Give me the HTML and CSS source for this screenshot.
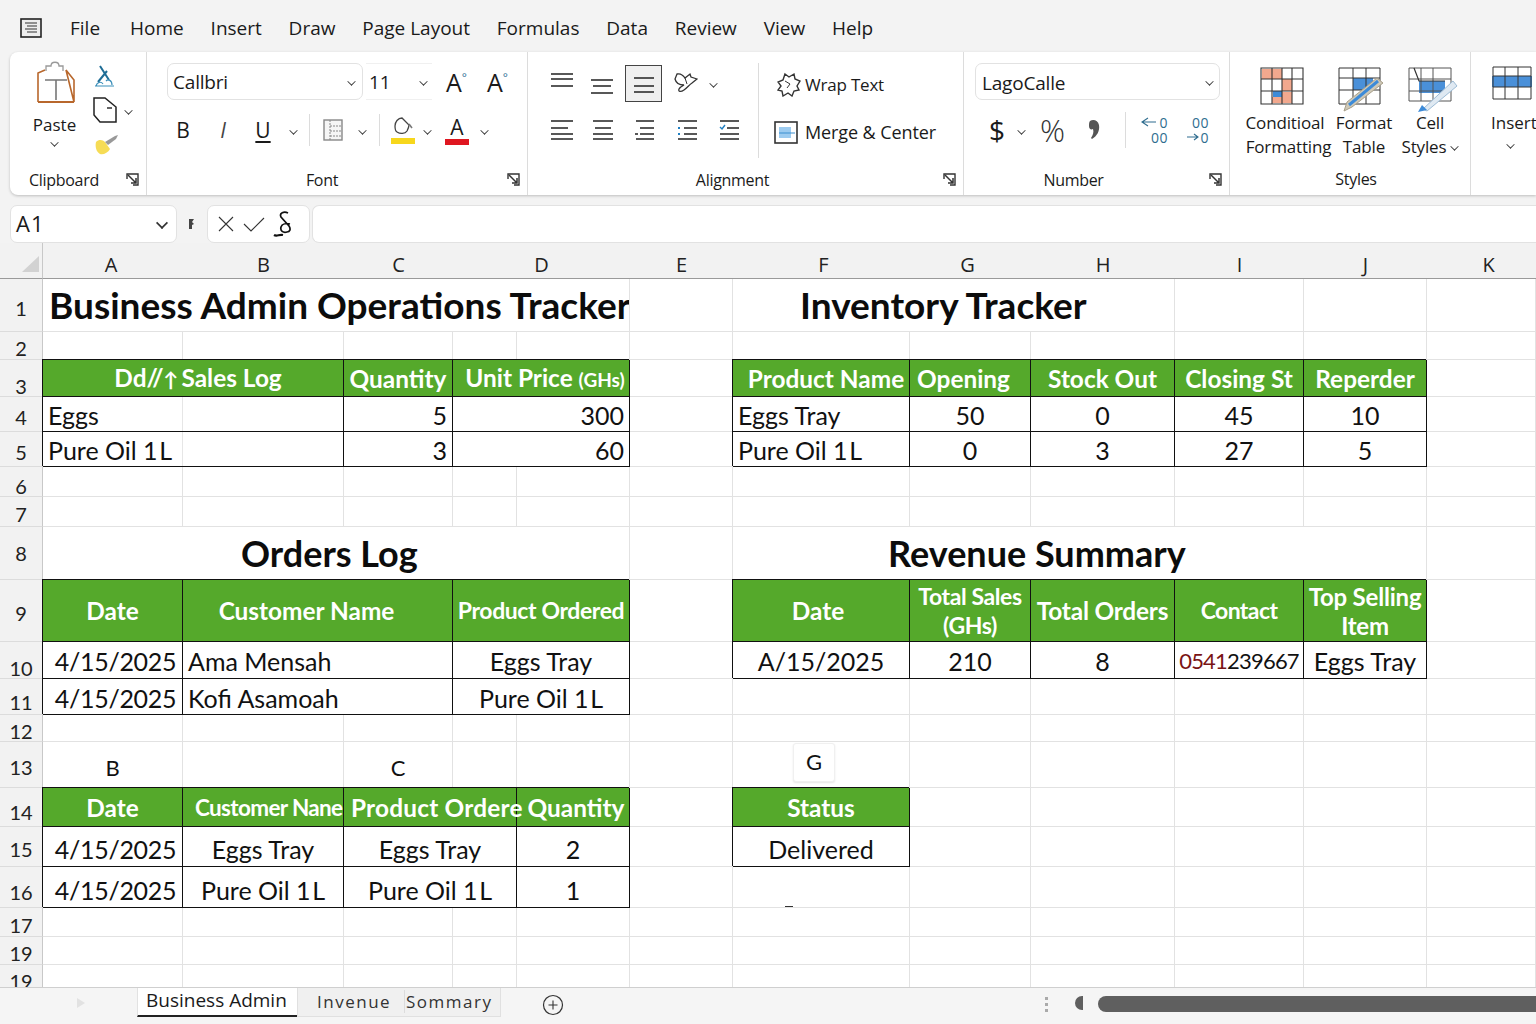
FILE: index.html
```html
<!DOCTYPE html>
<html lang="en">
<head>
    <meta charset="UTF-8">
    <meta name="viewport" content="width=device-width, initial-scale=1.0">
    <title>Business Admin Operations Tracker</title>
    <link rel="stylesheet" href="styles.css">
</head>
<body>

<svg class="defs" aria-hidden="true">
    <symbol id="launcher" viewBox="0 0 13 13">
        <path d="M1 6V1h11v11H7" fill="none" stroke="#333" stroke-width="1.4"/>
        <path d="M2 2l8 8M10 5v5H5" fill="none" stroke="#333" stroke-width="1.5"/>
    </symbol>
</svg>

<div class="app">

    <nav class="menubar">
        <svg class="menu-icon" width="22" height="20" viewBox="0 0 22 20">
            <rect x="1" y="1" width="20" height="18" fill="#eee" stroke="#222" stroke-width="1.6"/>
            <path d="M5 5h12M7 8h10M5 11h12M7 14h10" stroke="#333" stroke-width="1.2"/>
        </svg>
        <a class="menu-file">File</a>
        <a>Home</a>
        <a>Insert</a>
        <a>Draw</a>
        <a>Page Layout</a>
        <a>Formulas</a>
        <a>Data</a>
        <a>Review</a>
        <a>View</a>
        <a>Help</a>
    </nav>

    <section class="ribbon">

        <div class="group g-clipboard">
            <div class="group-body clip-body">
                <div class="paste">
                    <svg width="40" height="46" viewBox="0 0 40 46">
                        <path d="M2 44V15l7-3M30 12l8 10v22z" fill="none" stroke="#b8672c" stroke-width="1.6"/>
                        <path d="M2 44h36" stroke="#b8672c" stroke-width="2"/>
                        <path d="M10 13V8h5c0-5 8-5 8 0h4v5" fill="#fff" stroke="#999" stroke-width="1.3"/>
                        <path d="M9 22h22M20 22v20" stroke="#777" stroke-width="1.6"/>
                    </svg>
                    <span>Paste</span>
                    <i class="chev"></i>
                </div>
                <div class="clip-tools">
                    <svg width="22" height="22" viewBox="0 0 22 22">
                        <path d="M6 1l9 14M13 6L4 17" fill="none" stroke="#1f6d96" stroke-width="2"/>
                        <path d="M2 21c1-4 5-5 7-2M12 16c2-2 6-1 6 4M1 21h19" fill="none" stroke="#3b8fba" stroke-width="1.2"/>
                    </svg>
                    <div class="clip-copy">
                        <svg width="26" height="28" viewBox="0 0 26 28">
                            <path d="M2 2h11l11 9v15H8l-6-7z" fill="#fff" stroke="#222" stroke-width="1.5"/>
                            <path d="M15 12h5" stroke="#222" stroke-width="1.4"/>
                        </svg>
                        <i class="chev"></i>
                    </div>
                    <svg width="26" height="24" viewBox="0 0 26 24">
                        <path d="M2 9c3-3 7-2 9 0l5 7c-2 4-7 6-10 5-4-2-5-8-4-12z" fill="#f6dc55"/>
                        <path d="M11 9l10-6 3-1-2 4-8 6z" fill="#999"/>
                    </svg>
                </div>
            </div>
            <div class="group-label">
                <span class="clip-label">Clipboard</span>
                <svg class="launcher"><use href="#launcher"/></svg>
            </div>
        </div>

        <div class="group g-font">
            <div class="group-body">
                <div class="font-top">
                    <div class="combo font-name">Callbri<i class="chev"></i></div>
                    <div class="combo font-size">11<i class="chev"></i></div>
                    <span class="grow grow-up">A<sup>°</sup></span>
                    <span class="grow grow-down">A<sup>°</sup></span>
                </div>
                <div class="font-bottom">
                    <span class="fmt fmt-b">B</span>
                    <span class="fmt fmt-i">I</span>
                    <span class="fmt fmt-u">U</span>
                    <span class="slot s20"><i class="chev"></i></span>
                    <span class="vsep sep-a"></span>
                    <svg class="border-icon" width="20" height="22" viewBox="0 0 20 22">
                        <rect x="1" y="1" width="18" height="20" fill="#f6f6f6" stroke="#888" stroke-width="1.4"/>
                        <path d="M7 1v20M7 7h12M7 12h12M7 17h12" stroke="#888" stroke-dasharray="2 1"/>
                    </svg>
                    <span class="slot s20 after-border"><i class="chev"></i></span>
                    <span class="vsep sep-b"></span>
                    <div class="swatch-tool fill-tool">
                        <svg width="22" height="20" viewBox="0 0 22 20">
                            <path d="M3 10c0-4 3-8 7-8l7 7c0 2-1 4-2 6-2 3-7 3-10 1-2-1-2-4-2-6z" fill="none" stroke="#444" stroke-width="1.3"/>
                            <path d="M17 8l3 4" stroke="#777" stroke-width="1.5"/>
                        </svg>
                        <b class="swatch yellow"></b>
                    </div>
                    <span class="slot s20 after-fill"><i class="chev"></i></span>
                    <div class="swatch-tool color-tool">
                        <span>A</span>
                        <b class="swatch red"></b>
                    </div>
                    <span class="slot s20 after-color"><i class="chev"></i></span>
                </div>
            </div>
            <div class="group-label">
                <span>Font</span>
                <svg class="launcher"><use href="#launcher"/></svg>
            </div>
        </div>

        <div class="group g-align">
            <div class="group-body align-body">
                <div class="align-grid">
                    <div class="align-row">
                        <svg class="al" width="24" height="22" viewBox="0 0 24 22"><path d="M1 2h22M1 7h22M1 14h22" stroke="#222" stroke-width="1.5"/></svg>
                        <svg class="al" width="24" height="22" viewBox="0 0 24 22"><path d="M1 8h22M3 14h18M1 21h22" stroke="#222" stroke-width="1.5"/></svg>
                        <span class="al-on"><svg width="22" height="20" viewBox="0 0 22 20"><path d="M1 5h20M1 13h20M1 19h20" stroke="#222" stroke-width="1.5"/></svg></span>
                        <svg class="orient" width="24" height="24" viewBox="0 0 24 24">
                            <path d="M3 3c4-1 6 1 8 4l5-4 1 3 6 2-5 4c-3 2-5 5-8 7-3 2-6 2-5-1 1-2 3-3 5-4-4 0-8-2-9-6z" fill="#fff" stroke="#333" stroke-width="1.3"/>
                            <path d="M11 7l2 6" stroke="#333"/>
                        </svg>
                        <i class="chev orient-chev"></i>
                    </div>
                    <div class="align-row second">
                        <svg class="al" width="24" height="22" viewBox="0 0 24 22"><path d="M1 2h22M1 9h17M1 15h22M1 20h22" stroke="#222" stroke-width="1.5"/></svg>
                        <svg class="al" width="22" height="22" viewBox="0 0 22 22"><path d="M1 2h20M3 9h16M1 15h20M1 20h20" stroke="#222" stroke-width="1.5"/></svg>
                        <svg class="al al-right" width="20" height="22" viewBox="0 0 20 22"><path d="M2 2h18M6 9h14M1 15h3M6 15h14M2 20h18" stroke="#222" stroke-width="1.5"/></svg>
                        <svg class="al al-in" width="20" height="22" viewBox="0 0 20 22"><path d="M1 2h19M7 9h13M7 15h13M1 20h19" stroke="#222" stroke-width="1.5"/><path d="M1 9h3M1 15h3" stroke="#1f7fc2" stroke-width="2" stroke-dasharray="2 1"/></svg>
                        <svg class="al al-out" width="20" height="22" viewBox="0 0 20 22"><path d="M1 2h19M8 9h12M1 15h19M1 20h19" stroke="#222" stroke-width="1.5"/><path d="M1 8l2 2 3-4" fill="none" stroke="#1f7fc2" stroke-width="1.4"/></svg>
                    </div>
                </div>
                <span class="vsep sep-c"></span>
                <div class="wrap-col">
                    <div class="wrap-item">
                        <svg width="24" height="25" viewBox="0 0 24 25">
                            <path d="M8 2l4 3 5-3 1 5 5 2-3 5 2 4-5 1-2 5-4-3-5 3-1-5-4-1 3-4-3-4 5-2z" fill="#fff" stroke="#333" stroke-width="1.4"/>
                            <path d="M8 9l5 3-3 4" fill="none" stroke="#333"/>
                        </svg>
                        <span>Wrap Text</span>
                    </div>
                    <div class="wrap-item merge">
                        <svg width="24" height="23" viewBox="0 0 24 23">
                            <rect x="1" y="1" width="22" height="21" fill="#fff" stroke="#333" stroke-width="1.6"/>
                            <rect x="5" y="6" width="12" height="11" fill="#9ccbf0"/>
                            <path d="M5 12h16" stroke="#3a8fd0"/>
                        </svg>
                        <span>Merge &amp; Center</span>
                    </div>
                </div>
            </div>
            <div class="group-label">
                <span>Alignment</span>
                <svg class="launcher"><use href="#launcher"/></svg>
            </div>
        </div>

        <div class="group g-number">
            <div class="group-body">
                <div class="combo num-format">LagoCalle<i class="chev"></i></div>
                <div class="num-row">
                    <span class="num-dollar">$</span>
                    <i class="chev"></i>
                    <span class="num-pct">%</span>
                    <svg class="num-comma" width="11" height="22" viewBox="0 0 11 22">
                        <path d="M1 2c3-2 8-1 9 4 1 6-2 11-7 14l-1-1c2-3 3-6 2-9-2 1-4 0-4-3 0-2 0-4 1-5z" fill="#555"/>
                    </svg>
                    <span class="vsep sep-d"></span>
                    <div class="dec dec-inc">
                        <span><svg width="17" height="11" viewBox="0 0 17 11"><path d="M7 1L1 5l6 4M2 5h13" fill="none" stroke="#2f6d8f" stroke-width="1.1"/></svg>0</span>
                        <span>00</span>
                    </div>
                    <div class="dec dec-dec">
                        <span>00</span>
                        <span><svg width="13" height="11" viewBox="0 0 13 11"><path d="M1 5h11M8 2l4 3-4 3" fill="none" stroke="#2f6d8f" stroke-width="1.1"/></svg>0</span>
                    </div>
                </div>
            </div>
            <div class="group-label">
                <span>Number</span>
                <svg class="launcher"><use href="#launcher"/></svg>
            </div>
        </div>

        <div class="group g-styles">
            <div class="group-body styles-body">
                <div class="style-btn btn-cf">
                    <svg width="44" height="46" viewBox="0 0 44 46" preserveAspectRatio="xMidYMin">
                        <path d="M2 2h10v10H2zM12 2h10v10H12zM22 12h10v12H22zM12 30h10v6H12zM22 25h10v11H22z" fill="#f2a88e"/>
                        <rect x="13" y="24" width="9" height="6" fill="#3d8bd8"/>
                        <path d="M1 1h42v36H1zM1 12h42M1 24h42M12 1v36M22 1v36M32 1v36" fill="none" stroke="#333" stroke-width="1.1"/>
                    </svg>
                    <span>Conditioal<br><b class="cf-second">Formatting</b></span>
                </div>
                <div class="style-btn btn-ft">
                    <svg width="46" height="46" viewBox="0 0 46 46">
                        <rect x="15" y="11" width="20" height="12" fill="#4a90d9"/>
                        <path d="M1 1h41v36H1zM1 11h41M1 23h41M15 1v36M28 1v36" fill="none" stroke="#333" stroke-width="1"/>
                        <path d="M6 44l3-9 30-24 6 5-31 24z" fill="#cfc9b8" stroke="#a89f8a"/>
                        <path d="M11 38L40 14" stroke="#3d8bd8" stroke-width="3"/>
                    </svg>
                    <span>Format<br>Table</span>
                </div>
                <div class="style-btn btn-cs">
                    <svg width="50" height="46" viewBox="0 0 50 46">
                        <rect x="11" y="14" width="26" height="12" fill="#4a90d9"/>
                        <path d="M1 1h42v33H1zM1 12h42M1 24h42M13 1v33M25 1v33" fill="none" stroke="#555" stroke-width="1"/>
                        <path d="M6 1l5 13h26" fill="none" stroke="#333" stroke-width="1.2"/>
                        <path d="M15 42l30-28 4 5-30 25z" fill="#dfe9f2" stroke="#9dbcd6"/>
                        <path d="M14 38l-4 7 9-2z" fill="#3d8bd8"/>
                    </svg>
                    <span>Cell<br>Styles<i class="chev inline"></i></span>
                </div>
            </div>
            <div class="group-label styles-label"><span>Styles</span></div>
        </div>

        <div class="group g-cells">
            <div class="insert-btn">
                <svg width="42" height="34" viewBox="0 0 42 34">
                    <rect x="1" y="10" width="40" height="11" fill="#4a90d9"/>
                    <path d="M2 1h38v32H2zM2 10h38M2 21h38M14 1v32M27 1v32" fill="none" stroke="#333" stroke-width="1"/>
                </svg>
                <span>Insert</span>
                <i class="chev"></i>
            </div>
        </div>

    </section>

    <div class="formula-bar">
        <div class="name-box">A1<i class="chev big"></i></div>
        <svg class="fb-grip" width="8" height="12" viewBox="0 0 8 12"><path d="M1 1h5L4 4l2 2-2 1v4H1z" fill="#444"/></svg>
        <div class="fb-tools">
            <svg width="18" height="18" viewBox="0 0 18 18"><path d="M2 2l14 14M16 2L2 16" stroke="#333" stroke-width="1.1"/></svg>
            <svg width="22" height="18" viewBox="0 0 22 18"><path d="M1 9l7 7L21 3" fill="none" stroke="#333" stroke-width="1.1"/></svg>
            <svg width="22" height="26" viewBox="0 0 22 26">
                <path d="M15 2c-4-2-9 0-7 4l8 9c2 3 1 6-2 6-4 1-7-1-6-5 1-3 5-4 9-3" fill="none" stroke="#111" stroke-width="1.7"/>
                <path d="M1 24c3 2 5-1 9 0" fill="none" stroke="#111" stroke-width="2.2"/>
            </svg>
        </div>
        <div class="fb-input"></div>
    </div>

    <div class="sheet">
        <table class="grid">
            <colgroup>
                <col class="c-head"><col class="c-a"><col class="c-b"><col class="c-c"><col class="c-d1"><col class="c-d2"><col class="c-e"><col class="c-f"><col class="c-g"><col class="c-h"><col class="c-i"><col class="c-j"><col class="c-k">
            </colgroup>
            <tr class="letters">
                <th class="corner"><span class="corner-tri"></span></th>
                <th class="ltr-a">A</th><th>B</th><th>C</th><th colspan="2">D</th><th>E</th><th class="ltr-f">F</th><th class="ltr-g">G</th><th>H</th><th>I</th><th>J</th><th class="ltr-k">K</th>
            </tr>
            <tr class="r1">
                <th>1</th>
                <td colspan="5" class="title">Business Admin Operations Tracker</td><td></td>
                <td colspan="3" class="title t-inv">Inventory Tracker</td><td></td><td></td><td></td>
            </tr>
            <tr class="r2">
                <th>2</th>
                <td></td><td></td><td></td><td></td><td></td><td></td><td></td><td></td><td></td><td></td><td></td><td></td>
            </tr>
            <tr class="r3">
                <th>3</th>
                <td colspan="2" class="hd hd-sales">Dd//<span class="arrow">↑</span> Sales Log</td><td class="hd">Quantity</td><td colspan="2" class="hd hd-price">Unit Price <small>(GHs)</small></td><td></td>
                <td class="hd hd-product">Product Name</td><td class="hd hd-opening">Opening</td><td class="hd">Stock Out</td><td class="hd">Closing St</td><td class="hd">Reperder</td><td></td>
            </tr>
            <tr class="r4">
                <th>4</th>
                <td colspan="2" class="bd faint">Eggs</td><td class="bd num">5</td><td colspan="2" class="bd num">300</td><td></td>
                <td class="bd">Eggs Tray</td><td class="bd mid">50</td><td class="bd mid">0</td><td class="bd mid">45</td><td class="bd mid">10</td><td></td>
            </tr>
            <tr class="r5">
                <th>5</th>
                <td colspan="2" class="bd faint">Pure Oil 1&#8202;L</td><td class="bd num">3</td><td colspan="2" class="bd num">60</td><td></td>
                <td class="bd">Pure Oil 1&#8202;L</td><td class="bd mid">0</td><td class="bd mid">3</td><td class="bd mid">27</td><td class="bd mid">5</td><td></td>
            </tr>
            <tr class="r6">
                <th>6</th>
                <td></td><td></td><td></td><td></td><td></td><td></td><td></td><td></td><td></td><td></td><td></td><td></td>
            </tr>
            <tr class="r7">
                <th>7</th>
                <td></td><td></td><td></td><td></td><td></td><td></td><td></td><td></td><td></td><td></td><td></td><td></td>
            </tr>
            <tr class="r8">
                <th>8</th>
                <td colspan="5" class="title t-orders">Orders Log</td><td></td>
                <td colspan="5" class="title t-revenue">Revenue Summary</td><td></td>
            </tr>
            <tr class="r9">
                <th>9</th>
                <td class="hd">Date</td><td colspan="2" class="hd hd-customer">Customer Name</td><td colspan="2" class="hd hd-narrow">Product Ordered</td><td></td>
                <td class="hd hd-date2">Date</td><td class="hd hd-wrap">Total Sales (GHs)</td><td class="hd hd-orders">Total Orders</td><td class="hd hd-contact">Contact</td><td class="hd hd-wrap hd-top">Top Selling Item</td><td></td>
            </tr>
            <tr class="r10">
                <th>10</th>
                <td class="bd mid date">4/15/2025</td><td colspan="2" class="bd">Ama Mensah</td><td colspan="2" class="bd mid">Eggs Tray</td><td></td>
                <td class="bd mid">A/15/2025</td><td class="bd mid">210</td><td class="bd mid">8</td><td class="bd mid phone"><span class="red-digits">0541</span>239667</td><td class="bd mid">Eggs Tray</td><td></td>
            </tr>
            <tr class="r11">
                <th>11</th>
                <td class="bd mid date">4/15/2025</td><td colspan="2" class="bd">Kofi Asamoah</td><td colspan="2" class="bd mid">Pure Oil 1&#8202;L</td><td></td>
                <td></td><td></td><td></td><td></td><td></td><td></td>
            </tr>
            <tr class="r12">
                <th>12</th>
                <td></td><td></td><td></td><td></td><td></td><td></td><td></td><td></td><td></td><td></td><td></td><td></td>
            </tr>
            <tr class="r13">
                <th>13</th>
                <td class="mid letter">B</td><td></td><td class="mid letter">C</td><td></td><td></td><td></td>
                <td class="chip-cell"><span class="chip">G</span></td><td></td><td></td><td></td><td></td><td></td>
            </tr>
            <tr class="r14">
                <th>14</th>
                <td class="hd">Date</td><td class="hd hd-tight">Customer Nane</td><td colspan="2" class="hd hd-over">Product Ordere</td><td class="hd hd-qty">Quantity</td><td></td>
                <td class="hd">Status</td><td></td><td></td><td></td><td></td><td></td>
            </tr>
            <tr class="r15">
                <th>15</th>
                <td class="bd mid date">4/15/2025</td><td class="bd mid">Eggs Tray</td><td colspan="2" class="bd mid">Eggs Tray</td><td class="bd mid">2</td><td></td>
                <td class="bd mid">Delivered</td><td></td><td></td><td></td><td></td><td></td>
            </tr>
            <tr class="r16">
                <th>16</th>
                <td class="bd mid date">4/15/2025</td><td class="bd mid">Pure Oil 1&#8202;L</td><td colspan="2" class="bd mid">Pure Oil 1&#8202;L</td><td class="bd mid">1</td><td></td>
                <td class="tick"></td><td></td><td></td><td></td><td></td><td></td>
            </tr>
            <tr class="r17">
                <th>17</th>
                <td></td><td></td><td></td><td></td><td></td><td></td><td></td><td></td><td></td><td></td><td></td><td></td>
            </tr>
            <tr class="r18">
                <th>19</th>
                <td></td><td></td><td></td><td></td><td></td><td></td><td></td><td></td><td></td><td></td><td></td><td></td>
            </tr>
            <tr class="r19">
                <th>19</th>
                <td></td><td></td><td></td><td></td><td></td><td></td><td></td><td></td><td></td><td></td><td></td><td></td>
            </tr>
        </table>
    </div>

    <footer class="tabbar">
        <svg class="tab-arrow" width="10" height="12" viewBox="0 0 10 12"><path d="M1 1l8 5-8 5z" fill="#e2e2e2"/></svg>
        <div class="tab tab-active">Business Admin</div>
        <div class="tab tab-other"><span class="tab-a">Invenue</span><span class="tab-b">Sommary</span></div>
        <svg class="tab-add" width="22" height="22" viewBox="0 0 22 22">
            <circle cx="11" cy="11" r="9.5" fill="none" stroke="#333" stroke-width="1.2"/>
            <path d="M11 6.5v9M6.5 11h9" stroke="#333" stroke-width="1.1"/>
        </svg>
        <span class="tab-dots"></span>
        <span class="scroll-cap"></span>
        <span class="scroll-thumb"></span>
    </footer>

</div>

</body>
</html>
```

FILE: styles.css
```css
* {
    box-sizing: border-box;
}
html, body {
    margin: 0;
    height: 100%;
    overflow: hidden;
}
body {
    font-family: "Open Sans", "Noto Sans", sans-serif;
    background: #f3f3f3;
    color: #1a1a1a;
}
.defs {
    display: none;
}
.app {
    width: 1536px;
    height: 1024px;
    display: flex;
    flex-direction: column;
    overflow: hidden;
}

/* menu */
.menubar {
    height: 52px;
    flex: none;
    display: flex;
    align-items: center;
    padding: 4px 0 0 20px;
    font-size: 19px;
}
.menubar a {
    margin-right: 26.8px;
}
.menubar .menu-file {
    margin-right: 30px;
}
.menu-icon {
    margin-right: 28px;
}

/* ribbon */
.ribbon {
    height: 143px;
    flex: none;
    margin-left: 10px;
    display: flex;
    background: #fff;
    border-radius: 8px 0 0 8px;
    box-shadow: 0 1px 3px rgba(0, 0, 0, 0.22);
    font-size: 17px;
}
.group {
    flex: none;
    display: flex;
    flex-direction: column;
    border-right: 1px solid #dcdcdc;
    position: relative;
}
.group-body {
    height: 112px;
    flex: none;
}
.group-label {
    flex: 1;
    text-align: center;
    font-size: 16px;
    line-height: 20px;
    padding-top: 6px;
    letter-spacing: -0.3px;
}
.launcher {
    position: absolute;
    right: 7px;
    bottom: 9px;
    width: 13px;
    height: 13px;
}
.chev {
    display: inline-block;
    width: 7px;
    height: 7px;
    border-right: 1.6px solid #333;
    border-bottom: 1.6px solid #333;
    transform: rotate(45deg) scale(0.85);
    flex: none;
}
.chev.inline {
    margin: 0 0 3px 5px;
}
.chev.big {
    width: 10px;
    height: 10px;
    border-width: 2px;
}
.vsep {
    display: block;
    width: 1px;
    background: #dcdcdc;
    flex: none;
}
.combo {
    height: 37px;
    display: flex;
    align-items: center;
    justify-content: space-between;
    border: 1px solid #e2e2e2;
    border-radius: 7px;
    padding: 0 6px 0 10px;
    font-size: 19px;
    letter-spacing: -0.2px;
    flex: none;
}

/* clipboard */
.g-clipboard {
    width: 137px;
}
.clip-body {
    display: flex;
    padding: 6px 0 0 23px;
}
.paste {
    width: 43px;
    display: flex;
    flex-direction: column;
    align-items: center;
}
.paste svg {
    margin-left: 2px;
}
.paste span {
    font-size: 17px;
    line-height: 22px;
    margin-top: 10px;
}
.paste .chev {
    margin-top: 3px;
}
.clip-tools {
    margin-left: 18px;
    display: flex;
    flex-direction: column;
    align-items: flex-start;
    padding-top: 7px;
}
.clip-copy {
    display: flex;
    align-items: center;
    margin: 9px 0 9px -2px;
}
.clip-copy .chev {
    margin-left: 7px;
}
.clip-label {
    display: block;
    text-align: left;
    padding-left: 19px;
}

/* font */
.g-font {
    width: 381px;
}
.g-font .group-body {
    padding: 11px 0 0 20px;
}
.g-font .group-label {
    padding-right: 30px;
}
.font-top {
    display: flex;
    align-items: center;
}
.font-name {
    width: 196px;
    padding: 0 7px 0 5px;
}
.font-size {
    width: 66px;
    margin-left: 3px;
    padding: 0 5px 0 3px;
    border-left: 0;
    border-right: 0;
    border-radius: 0;
    border-color: #f0f0f0;
}
.grow {
    font-size: 25px;
    line-height: 30px;
    font-weight: 400;
}
.grow sup {
    font-size: 12px;
    line-height: 0;
    vertical-align: 10px;
    color: #2d6f96;
}
.grow-up {
    margin-left: 14px;
}
.grow-down {
    margin-left: 20px;
}
.font-bottom {
    display: flex;
    align-items: center;
    margin-top: 14px;
    height: 32px;
    margin-left: -5px;
}
.fmt {
    width: 40px;
    text-align: center;
    font-size: 21px;
    line-height: 28px;
    font-family: "Open Sans", sans-serif;
}
.fmt-b {
    margin-left: 1px;
}
.fmt-i {
    font-style: italic;
    color: #444;
}
.fmt-u {
    text-decoration: underline;
    text-underline-offset: 3px;
}
.slot {
    display: flex;
    justify-content: center;
    width: 20px;
}
.sep-a {
    height: 32px;
    margin-left: 6px;
}
.border-icon {
    margin-left: 13px;
}
.after-border {
    margin-left: 9px;
}
.sep-b {
    height: 32px;
    margin-left: 7px;
}
.swatch-tool {
    display: flex;
    flex-direction: column;
    align-items: center;
    width: 24px;
}
.fill-tool {
    margin-left: 11px;
}
.after-fill {
    margin-left: 2px;
}
.color-tool {
    margin-left: 8px;
}
.color-tool span {
    font-size: 21px;
    line-height: 24px;
}
.after-color {
    margin-left: 5px;
}
.swatch {
    display: block;
    width: 24px;
    height: 6px;
}
.yellow {
    background: #f7d71c;
    margin-top: 2px;
}
.red {
    background: #df1620;
}

/* alignment */
.g-align {
    width: 436px;
}
.g-align .group-label {
    padding-right: 26px;
}
.align-body {
    display: flex;
    padding: 11px 0 0 22px;
}
.align-grid {
    width: 208px;
}
.align-row {
    display: flex;
    align-items: center;
    height: 40px;
}
.align-row.second {
    margin-top: 7px;
    gap: 18px;
}
.align-row .al {
    margin-right: 16px;
}
.align-row.second .al {
    margin-right: 0;
}
.align-row.second .al-right {
    margin-left: 2px;
}
.align-row.second .al-in {
    margin-left: 5px;
}
.align-row.second .al-out {
    margin-left: 4px;
}
.al-on {
    width: 37px;
    height: 37px;
    display: flex;
    align-items: center;
    justify-content: center;
    background: #efefef;
    border: 1px solid #444;
    margin-left: -5px;
}
.orient {
    margin-left: 12px;
}
.orient-chev {
    margin-left: 12px;
}
.sep-c {
    height: 95px;
    margin-top: 0;
}
.wrap-col {
    margin-left: 18px;
}
.wrap-item {
    display: flex;
    align-items: center;
    height: 40px;
    margin-top: 1px;
    font-size: 17px;
    letter-spacing: -0.2px;
}
.wrap-item span {
    margin-left: 4px;
}
.wrap-item.merge {
    margin: 8px 0 0 -3px;
    font-size: 18px;
    letter-spacing: -0.1px;
}
.wrap-item.merge span {
    margin-left: 7px;
}

/* number */
.g-number {
    width: 266px;
}
.g-number .group-body {
    padding: 11px 0 0 11px;
}
.g-number .group-label {
    padding-right: 46px;
}
.num-format {
    width: 245px;
    padding: 2px 6px 0 6px;
}
.num-format .chev {
    margin-bottom: 2px;
}
.num-row {
    display: flex;
    align-items: center;
    height: 40px;
    margin-top: 10px;
    padding-left: 14px;
}
.num-dollar {
    font-size: 28px;
    width: 14px;
}
.num-row .chev {
    margin-left: 15px;
}
.num-pct {
    font-size: 31px;
    margin-left: 15px;
    font-weight: 300;
    color: #333;
}
.num-comma {
    margin-left: 24px;
    flex: none;
}
.sep-d {
    height: 36px;
    margin-left: 25px;
}
.dec {
    display: flex;
    flex-direction: column;
    align-items: flex-end;
    font-size: 14px;
    line-height: 15px;
    color: #2f6d8f;
    letter-spacing: 0.5px;
    flex: none;
}
.dec-inc {
    width: 30px;
    margin-left: 12px;
}
.dec-dec {
    width: 24px;
    margin-left: 17px;
}
.dec svg {
    margin-right: 2px;
}

/* styles */
.g-styles {
    width: 241px;
}
.styles-body {
    display: flex;
    padding: 15px 0 0 13px;
    font-size: 17px;
    letter-spacing: -0.15px;
}
.style-btn {
    display: flex;
    flex-direction: column;
    align-items: center;
    text-align: center;
    line-height: 24px;
    flex: none;
}
.style-btn svg {
    flex: none;
    height: 46px;
}
.style-btn span {
    margin-top: -2px;
}
.btn-cf {
    width: 84px;
}
.btn-cf svg {
    margin-left: -6px;
}
.cf-second {
    font-weight: 400;
    margin-left: 7px;
}
.btn-ft {
    width: 66px;
    margin-left: 4px;
}
.btn-ft svg {
    margin-left: -7px;
}
.btn-cs {
    width: 62px;
    margin-left: 2px;
}
.btn-cs svg {
    margin-left: 6px;
}
.group-label.styles-label {
    padding-top: 5px;
    padding-left: 12px;
}
.g-cells {
    width: 70px;
    border-right: 0;
}
.insert-btn {
    display: flex;
    flex-direction: column;
    align-items: flex-start;
    padding: 14px 0 0 20px;
    font-size: 17px;
}
.insert-btn span {
    margin-top: 11px;
    line-height: 24px;
}
.insert-btn .chev {
    margin: 6px 0 0 16px;
}

/* formula bar */
.formula-bar {
    height: 38px;
    flex: none;
    margin-top: 10px;
    display: flex;
    align-items: stretch;
    padding-left: 10px;
}
.name-box {
    width: 167px;
    display: flex;
    align-items: center;
    justify-content: space-between;
    background: #fff;
    border: 1px solid #e2e2e2;
    border-radius: 7px;
    padding: 0 9px 3px 5px;
    font-size: 22px;
    letter-spacing: 1px;
}
.fb-grip {
    align-self: center;
    margin: 0 11px 0 11px;
    flex: none;
}
.fb-tools {
    width: 103px;
    display: flex;
    align-items: center;
    padding-left: 9px;
    gap: 8px;
    background: #fff;
    border: 1px solid #e2e2e2;
    border-radius: 7px;
}
.fb-input {
    flex: 1;
    margin-left: 2px;
    background: #fff;
    border: 1px solid #e2e2e2;
    border-right: 0;
    border-radius: 7px 0 0 7px;
}

/* sheet */
.sheet {
    flex: 1;
    overflow: hidden;
    background: #fff;
}
.grid {
    width: 1536px;
    table-layout: fixed;
    border-collapse: separate;
    border-spacing: 0;
    font-family: Lato, "Open Sans", sans-serif;
    font-size: 25px;
    color: #111;
}
.c-head { width: 43px; }
.c-a { width: 140px; }
.c-b { width: 161px; }
.c-c { width: 109px; }
.c-d1 { width: 64px; }
.c-d2 { width: 113px; }
.c-e { width: 103px; }
.c-f { width: 177px; }
.c-g { width: 121px; }
.c-h { width: 144px; }
.c-i { width: 129px; }
.c-j { width: 123px; }
.c-k { width: 109px; }

.grid th, .grid td {
    padding: 0;
    overflow: hidden;
    white-space: nowrap;
    font-weight: 400;
}
.grid td {
    border-right: 1px solid #e2e2e2;
    border-bottom: 1px solid #e2e2e2;
    padding: 2px 5px 0;
    line-height: 28px;
}
.grid th {
    background: #f2f2f2;
    border-right: 1px solid #c8c8c8;
    border-bottom: 1px solid #dcdcdc;
    font-size: 20px;
    color: #222;
    padding-top: 5px;
    line-height: 20px;
}
.grid .r3 th, .grid .r10 th {
    padding-top: 16px;
}
.grid .r11 th {
    padding-top: 10px;
}
.grid .r6 th, .grid .r14 th, .grid .r16 th {
    padding-top: 9px;
}
.grid .r8 th {
    padding-top: 0;
}
.letters {
    height: 36px;
}
.grid .letters th {
    border-right: 0;
    border-bottom: 1px solid #9a9a9a;
    font-family: "Open Sans", sans-serif;
    padding-top: 8px;
}
.grid .letters .corner {
    border-right: 1px solid #c8c8c8;
    position: relative;
}
.grid .letters .ltr-a {
    padding-right: 4px;
}
.grid .letters .ltr-f {
    padding-left: 4px;
}
.grid .letters .ltr-g {
    padding-right: 6px;
}
.grid .letters .ltr-k {
    padding-left: 14px;
}
.corner-tri {
    position: absolute;
    right: 3px;
    bottom: 6px;
    border-style: solid;
    border-width: 0 0 16px 17px;
    border-color: transparent transparent #d2d2d2 transparent;
}

.r1 { height: 53px; }
.r2 { height: 28px; }
.r3 { height: 37px; }
.r4 { height: 35px; }
.r5 { height: 35px; }
.r6 { height: 30px; }
.r7 { height: 30px; }
.r8 { height: 53px; }
.r9 { height: 62px; }
.r10 { height: 37px; }
.r11 { height: 36px; }
.r12 { height: 27px; }
.r13 { height: 46px; }
.r14 { height: 39px; }
.r15 { height: 40px; }
.r16 { height: 41px; }
.r17 { height: 29px; }
.r18 { height: 28px; }
.r19 { height: 28px; }

.r15 td, .r16 td {
    padding-top: 5px;
}

.grid td.title {
    font-size: 37px;
    line-height: 44px;
    font-weight: 700;
    color: #0c0c0c;
    padding: 0 0 0 6px;
}
.grid td.t-inv {
    padding-left: 67px;
}
.grid td.t-orders {
    padding-left: 198px;
    font-size: 36px;
}
.grid td.t-revenue {
    padding-left: 155px;
    font-size: 36px;
}

.grid td.hd, .grid td.bd {
    position: relative;
    border-right-color: #111;
    border-bottom-color: #111;
    box-shadow: -1px -1px 0 0 #111;
}
.grid td.hd {
    background: #55a92b;
    color: #fff;
    font-weight: 700;
    text-align: center;
    font-size: 24.4px;
    line-height: 29px;
    padding: 0 2px;
}
.hd small {
    font-size: 19px;
}
.arrow {
    display: inline-block;
    width: 12px;
    font-size: 20px;
}
.grid td.hd-sales {
    padding-left: 12px;
}
.grid td.hd-price {
    padding-left: 10px;
}
.grid td.hd-product {
    padding-left: 12px;
}
.grid td.hd-opening {
    padding-right: 15px;
}
.grid td.hd-customer {
    padding-right: 24px;
}
.grid td.hd-date2 {
    padding-right: 8px;
}
.grid td.hd-orders {
    letter-spacing: -0.2px;
}
.grid td.hd-contact {
    font-size: 23px;
    letter-spacing: -0.6px;
}
.grid td.hd-narrow {
    font-size: 23px;
    letter-spacing: -0.4px;
}
.grid td.hd-wrap {
    white-space: normal;
    font-size: 23px;
    letter-spacing: -0.4px;
}
.grid td.hd-top {
    font-size: 24px;
    letter-spacing: -0.2px;
}
.grid td.hd-tight {
    font-size: 22.5px;
    letter-spacing: -0.65px;
    padding-left: 12px;
}
.grid td.hd-over {
    overflow: visible;
    z-index: 1;
    text-align: left;
    padding-left: 7px;
    letter-spacing: 0.2px;
}
.grid td.hd-qty {
    padding-left: 8px;
}
.grid td.num {
    text-align: right;
}
.grid td.mid {
    text-align: center;
}
.grid td.date {
    padding-left: 9px;
    padding-right: 3px;
    letter-spacing: -0.3px;
}
.grid td.letter {
    font-size: 22px;
    padding-top: 6px;
}
.grid td.phone {
    font-size: 22px;
    letter-spacing: -0.8px;
    padding: 2px 0 0;
}
.red-digits {
    color: #7a1414;
}
.grid td.faint {
    background: linear-gradient(#e6e6e6, #e6e6e6) 139px 0 / 1px 100% no-repeat;
}
.grid td.chip-cell {
    padding: 0 0 5px 60px;
}
.chip {
    display: flex;
    align-items: center;
    justify-content: center;
    width: 42px;
    height: 39px;
    font-size: 22px;
    background: #fff;
    border: 1px solid #f0f0f0;
    border-radius: 3px;
    box-shadow: 0 1px 2px rgba(0, 0, 0, 0.1);
}
.tick {
    position: relative;
}
.tick::after {
    content: "";
    position: absolute;
    left: 52px;
    bottom: -1px;
    width: 8px;
    height: 2px;
    background: #333;
}

/* tabs */
.tabbar {
    height: 37px;
    flex: none;
    display: flex;
    align-items: flex-start;
    background: #f5f5f5;
    border-top: 1px solid #cfcfcf;
    font-size: 19px;
}
.tabbar > * {
    flex: none;
}
.tab-arrow {
    margin: 9px 0 0 76px;
}
.tab {
    height: 29px;
    display: flex;
    align-items: center;
}
.tab-active {
    width: 160px;
    margin-left: 51px;
    padding: 0 0 4px 8px;
    background: #fff;
    border-left: 1px solid #e2e2e2;
    border-bottom: 2px solid #222;
}
.tab-other {
    width: 204px;
    padding-bottom: 2px;
    background: #f0f0f0;
    border: 1px solid #e0e0e0;
    border-top: 0;
    color: #333;
    letter-spacing: 1.5px;
    font-size: 17px;
}
.tab-a {
    width: 88px;
    margin-left: 19px;
    border-right: 1px solid #dcdcdc;
}
.tab-b {
    padding-left: 1px;
}
.tab-add {
    margin: 6px 0 0 41px;
}
.tab-dots {
    width: 3px;
    height: 16px;
    margin: 9px 0 0 481px;
    background: repeating-linear-gradient(#aaa 0 3px, transparent 3px 6px);
}
.scroll-cap {
    width: 8px;
    height: 14px;
    margin: 8px 0 0 27px;
    background: #5f5f5f;
    border-radius: 7px 0 0 7px;
}
.scroll-thumb {
    width: 460px;
    height: 16px;
    margin: 8px 0 0 15px;
    background: #5f5f5f;
    border-radius: 8px;
}
```
